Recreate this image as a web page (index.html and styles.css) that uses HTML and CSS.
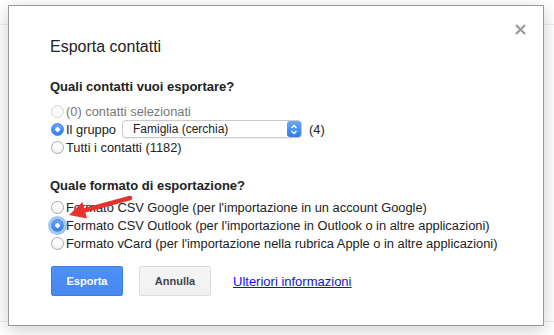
FILE: index.html
```html
<!DOCTYPE html>
<html lang="it">
<head>
  <meta charset="UTF-8" />
  <title>Esporta contatti</title>
  <link rel="stylesheet" href="styles.css">
</head>
<body>
  <div class="page">
    <div class="dialog">
      <span class="close">
        <svg width="11" height="11" viewBox="0 0 11 11"><path d="M1 1L10 10M10 1L1 10" stroke="#999" stroke-width="2.2"/></svg>
      </span>
      <div class="title">Esporta contatti</div>

      <div class="section-title">Quali contatti vuoi esportare?</div>
      <label class="row disabled"><input type="radio" name="who" disabled> (0) contatti selezionati</label>
      <label class="row">
        <input type="radio" name="who" checked> Il gruppo
        <span class="select">
          <span class="select-text">Famiglia (cerchia)</span>
          <span class="stepper">
            <svg width="8" height="11" viewBox="0 0 8 11"><path d="M1.5 4L4 1.5L6.5 4M1.5 7L4 9.5L6.5 7" fill="none" stroke="#fff" stroke-width="1.4"/></svg>
          </span>
        </span>
        <span class="count">(4)</span>
      </label>
      <label class="row"><input type="radio" name="who"> Tutti i contatti (1182)</label>

      <div class="section-title second">Quale formato di esportazione?</div>
      <label class="row"><input type="radio" name="fmt"> Formato CSV Google (per l'importazione in un account Google)</label>
      <label class="row"><input type="radio" name="fmt" class="focused" checked> Formato CSV Outlook (per l'importazione in Outlook o in altre applicazioni)</label>
      <label class="row"><input type="radio" name="fmt"> Formato vCard (per l'importazione nella rubrica Apple o in altre applicazioni)</label>

      <div class="actions">
        <button class="btn primary">Esporta</button>
        <button class="btn">Annulla</button>
        <a href="#" class="more">Ulteriori informazioni</a>
      </div>

      <svg class="arrow" width="80" height="32" viewBox="0 0 80 32">
        <line x1="66" y1="5" x2="20" y2="17.5" stroke="#e8322f" stroke-width="4.5" stroke-linecap="round"/>
        <polygon points="5,22 23,25.5 18.5,9" fill="#e8322f"/>
      </svg>
    </div>
  </div>
</body>
</html>
```

FILE: styles.css
```css
body {
  margin: 0;
  font-family: "Liberation Sans", Arial, sans-serif;
  color: #222;
  background: #fff;
}
.page {
  height: 335px;
  padding: 5px 0 0 8px;
  box-sizing: border-box;
  background:
    linear-gradient(#ececec, #ececec) 0 24px / 100% 1px no-repeat,
    linear-gradient(#ececec, #ececec) 0 321px / 100% 1px no-repeat;
}
.dialog {
  position: relative;
  width: 534px;
  height: 319px;
  background: #fff;
  border: 1px solid #999;
  box-shadow: 0 4px 16px rgba(0, 0, 0, 0.2);
}
.close {
  position: absolute;
  top: 18px;
  right: 17px;
  line-height: 0;
}
.title {
  font-size: 16px;
  line-height: 20px;
  padding: 31px 0 0 41px;
  color: #222;
}
.section-title {
  font-size: 13px;
  font-weight: bold;
  line-height: 16px;
  margin: 22px 0 7px 41px;
  color: #222;
}
.section-title.second {
  margin-top: 22px;
  margin-bottom: 4px;
}
.row {
  display: flex;
  align-items: center;
  height: 18px;
  margin-left: 41px;
  font-size: 12.85px;
  color: #222;
  white-space: nowrap;
}
.row.disabled {
  color: #777;
}
.row input {
  -webkit-appearance: none;
  appearance: none;
  width: 13px;
  height: 13px;
  margin: 0 2px 0 1px;
  border: 1px solid #a9a9a9;
  border-radius: 50%;
  background: linear-gradient(#fff, #f2f2f2);
  box-sizing: border-box;
  flex: none;
}
.row input:disabled {
  border-color: #d4d4d4;
  background: #fafafa;
}
.row input:checked {
  border-color: #3a82e8;
  background: radial-gradient(circle, #fff 0 2px, transparent 2.5px), linear-gradient(#69a8f8, #2f7ef0);
}
.row input.focused {
  box-shadow: 0 0 0 3px rgba(90, 150, 235, 0.55);
}
.select {
  display: inline-flex;
  align-items: center;
  justify-content: space-between;
  width: 180px;
  height: 18px;
  margin-left: 6px;
  border: 1px solid #c9c9c9;
  border-radius: 4px;
  box-sizing: border-box;
  background: #fff;
  box-shadow: 0 1px 1px rgba(0, 0, 0, 0.06);
}
.select-text {
  font-size: 12px;
  padding-left: 10px;
  color: #222;
}
.stepper {
  display: flex;
  align-items: center;
  justify-content: center;
  width: 14px;
  height: 16px;
  border-radius: 3px;
  background: linear-gradient(#6aa9f8, #2c7bef);
}
.count {
  margin-left: 7px;
}
.actions {
  display: flex;
  align-items: center;
  margin: 14px 0 0 42px;
}
.btn {
  width: 72px;
  height: 30px;
  border: 1px solid #dcdcdc;
  border-radius: 2px;
  background: linear-gradient(#f5f5f5, #f1f1f1);
  color: #444;
  font-family: "Liberation Sans", Arial, sans-serif;
  font-size: 11px;
  font-weight: bold;
  margin-right: 16px;
  padding: 0;
}
.btn.primary {
  background: linear-gradient(#4d90fe, #4787ed);
  border-color: #3b7ded;
  color: #fff;
}
.more {
  margin-left: 6px;
  font-size: 13px;
  color: #1010e8;
  text-decoration: underline;
}
.arrow {
  position: absolute;
  left: 55px;
  top: 187px;
}
```
